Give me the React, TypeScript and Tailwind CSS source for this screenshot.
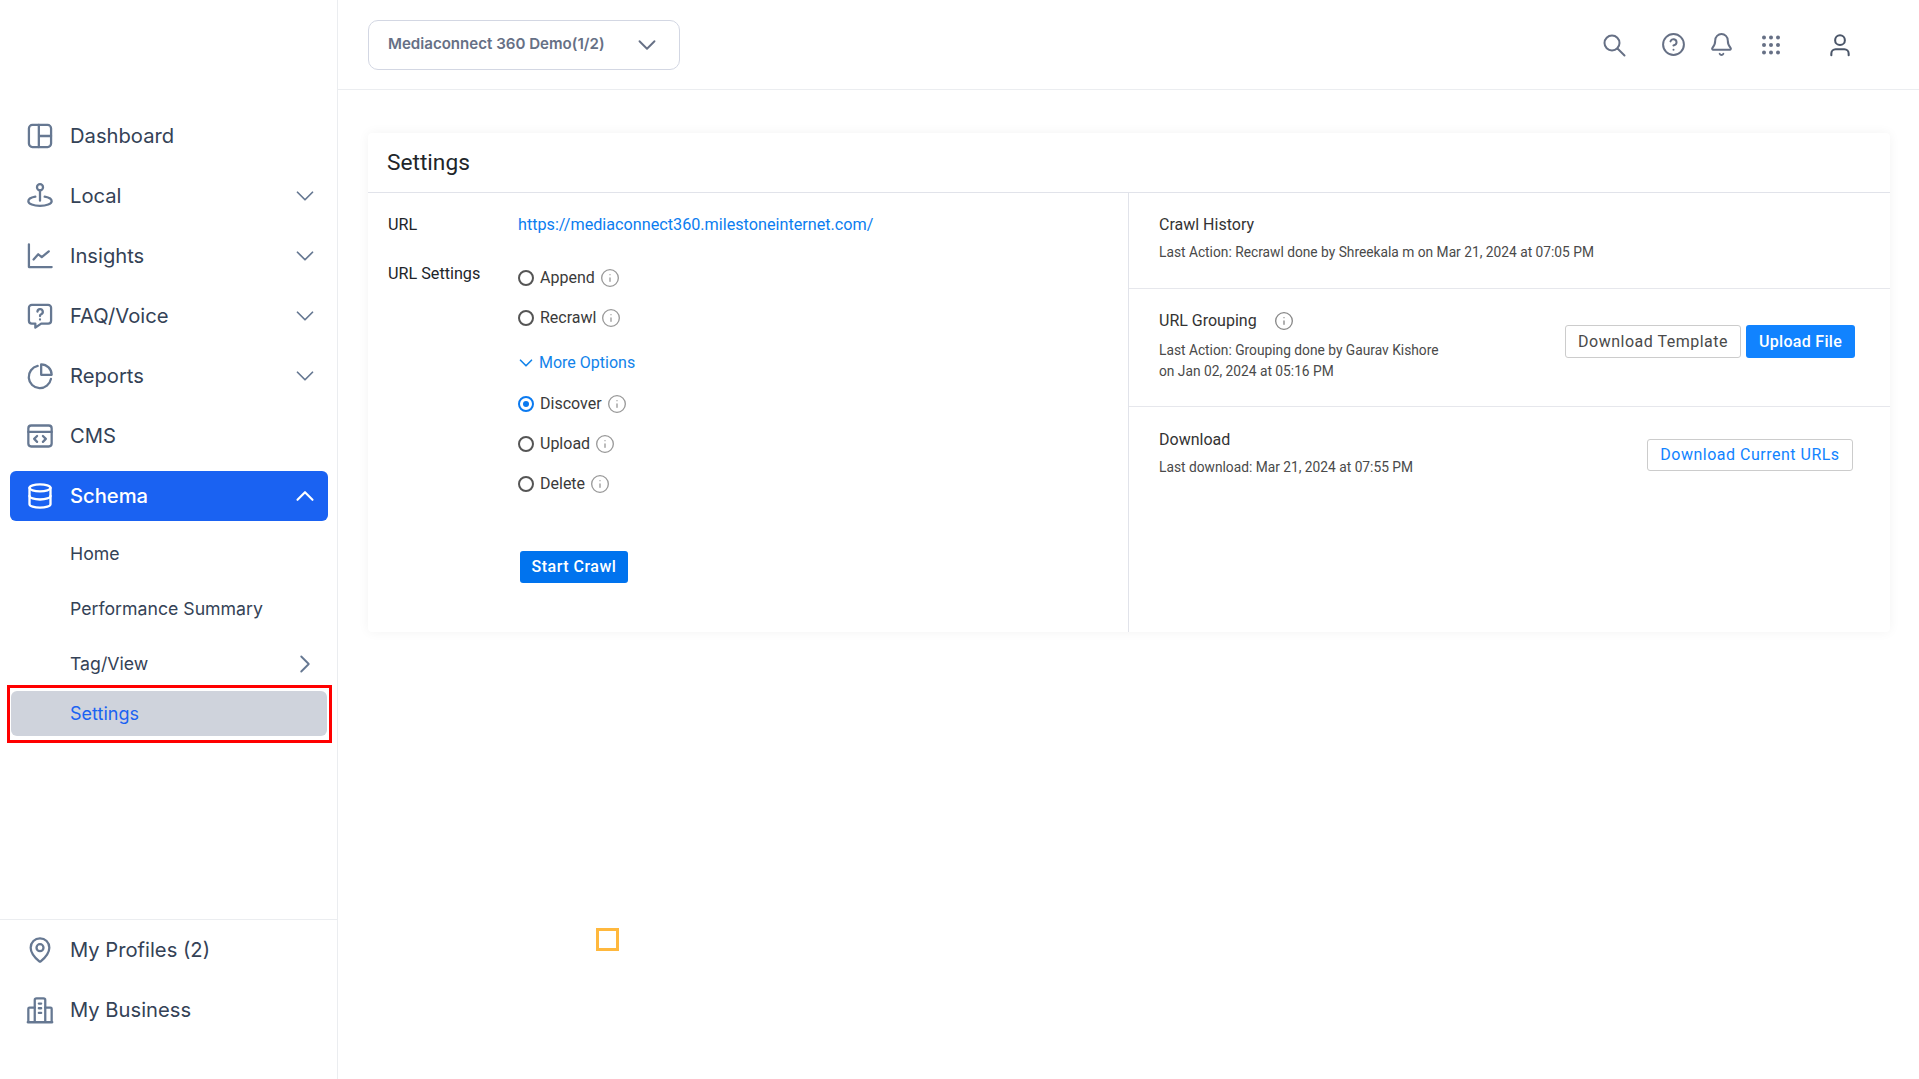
import React from "react";
import { ChevronDown, ChevronUp, ChevronRight, Bell, CircleHelp, Database, MapPin, Info } from "lucide-react";

const Ico = ({ children, className = "" }: { children: React.ReactNode; className?: string }) => (
  <svg width="28" height="28" viewBox="0 0 24 24" fill="none" stroke="currentColor" strokeWidth="1.95" strokeLinecap="round" strokeLinejoin="round" className={className}>
    {children}
  </svg>
);

const icons: Record<string, React.ReactNode> = {
  Dashboard: <Ico><rect x="2.5" y="2.5" width="19" height="19" rx="3" /><path d="M11 2.5v19M11 12h10.5" /></Ico>,
  Local: <Ico><circle cx="12" cy="4.5" r="2.6" /><path d="M12 7v9" /><path d="M8 12.6c-3.4.6-6 1.9-6 3.9 0 2.3 4.5 3.9 10 3.9s10-1.6 10-3.9c0-2-2.6-3.300-6-3.900" /></Ico>,
  Insights: <Ico><path d="M2.500 2v19.500H22" /><path d="M6.500 15l4-4.500 3 2.500 6-5" /></Ico>,
  "FAQ/Voice": <Ico><path d="M5 2.500h14a2.500 2.500 0 0 1 2.500 2.500v11a2.500 2.500 0 0 1-2.500 2.500h-6l-5 3.500v-3.500H5A2.500 2.500 0 0 1 2.500 16V5A2.500 2.500 0 0 1 5 2.500z" /><path d="M9.800 8.200a2.300 2.300 0 1 1 3.200 2.300c-.7.3-1 .8-1 1.500" /><path d="M12 15h.01" /></Ico>,
  Reports: <Ico><path d="M10 3.400A9.600 9.600 0 1 0 21.400 14.500" /><path d="M13 2a9 9 0 0 1 9 9h-9z" /></Ico>,
  CMS: <Ico><rect x="2" y="3" width="20" height="18" rx="2.500" /><path d="M2 8.500h20" /><path d="M9.500 12l-2.500 2.500 2.500 2.500M14.500 12l2.500 2.500-2.500 2.500" /></Ico>,
  Schema: <Database size={28} strokeWidth={2} />,
};

const Row = ({ label, chev }: { label: string; chev?: boolean }) => (
  <div className="h-[50px] ml-[10px] mr-[9px] pl-[16px] pr-[8px] flex items-center text-[#667892]">
    <span className="w-[28px] flex justify-center">{icons[label]}</span>
    <span className="ml-[16px] flex-1 text-[20.2px] text-[#344256]">{label}</span>
    {chev && <ChevronDown size={30} strokeWidth={1.4} />}
  </div>
);

const Radio = ({ label, on }: { label: string; on?: boolean }) => (
  <div className="flex items-center h-[24px] text-[16px] text-[#3a3a3a]">
    <span className={"w-[16px] h-[16px] rounded-full border-2 flex items-center justify-center " + (on ? "border-[#0b7af0]" : "border-[#555555]")}>
      {on && <span className="w-[6px] h-[6px] rounded-full bg-[#0b7af0]" />}
    </span>
    <span className="ml-[6px]">{label}</span>
    <Info size={20} strokeWidth={1.6} className="ml-[5px] text-[#999999]" />
  </div>
);

export default function App() {
  return (
    <div className="relative flex h-screen overflow-hidden bg-white font-['Roboto',sans-serif]">
      <aside className="w-[338px] shrink-0 border-r border-[#ebedf0] flex flex-col font-['Inter',sans-serif]">
        <nav className="pt-[111px] flex flex-col gap-[10px]">
          <Row label="Dashboard" />
          <Row label="Local" chev />
          <Row label="Insights" chev />
          <Row label="FAQ/Voice" chev />
          <Row label="Reports" chev />
          <Row label="CMS" />
          <div className="h-[50px] ml-[10px] mr-[9px] pl-[16px] pr-[8px] flex items-center rounded-[6px] bg-[#1a62f2] text-white">
            <span className="w-[28px] flex justify-center">{icons.Schema}</span>
            <span className="ml-[16px] flex-1 text-[20.2px] font-medium">Schema</span>
            <ChevronUp size={30} strokeWidth={1.7} />
          </div>
        </nav>
        <div className="mt-[10px] flex flex-col text-[17.7px] text-[#344256]">
          <div className="h-[45px] pl-[70px] pt-[2px] flex items-center">Home</div>
          <div className="h-[45px] mt-[10px] pl-[70px] pt-[2px] flex items-center">Performance Summary</div>
          <div className="h-[45px] mt-[10px] pl-[70px] pr-[17px] flex items-center justify-between">
            <span className="pt-[2px]">Tag/View</span>
            <ChevronRight size={30} strokeWidth={1.5} className="text-[#667892]" />
          </div>
          <div className="h-[45px] mt-[5px] ml-[11px] mr-[10px] pl-[59px] flex items-center rounded-[6px] bg-[#cfd3dc] text-[#1a62f2] text-[18px]">Settings</div>
        </div>
        <div className="mt-auto mb-[44px] border-t border-[#ebedf0] pt-[5px] flex flex-col gap-[10px]">
          <div className="h-[50px] mx-[10px] pl-[16px] flex items-center text-[#667892]">
            <span className="w-[28px] flex justify-center"><MapPin size={28} strokeWidth={1.95} /></span>
            <span className="ml-[16px] text-[20.2px] text-[#344256]">My Profiles (2)</span>
          </div>
          <div className="h-[50px] mx-[10px] pl-[16px] flex items-center text-[#667892]">
            <span className="w-[28px] flex justify-center">
              <Ico><path d="M1.500 22.500h21" /><path d="M7.500 22V3.500a1.500 1.500 0 0 1 1.500-1.500h6a1.500 1.500 0 0 1 1.500 1.500V22" /><path d="M7.500 10H3a1 1 0 0 0-1 1v11M16.500 10H21a1 1 0 0 1 1 1v11" /><path d="M11 6.500h2M11 10.500h2M11 14.500h2" /></Ico>
            </span>
            <span className="ml-[16px] text-[20.2px] text-[#344256]">My Business</span>
          </div>
        </div>
      </aside>

      <main className="flex-1 min-w-0 flex flex-col">
        <header className="h-[90px] shrink-0 border-b border-[#ebedf0] flex items-center pl-[30px] text-[#667085]">
          <div className="w-[312px] h-[50px] rounded-[10px] border border-[#d3d7e3] flex items-center pl-[19px] pr-[17px] justify-between font-['Inter',sans-serif] text-[15.1px] font-semibold">
            Mediaconnect 360 Demo(1/2)
            <ChevronDown size={30} strokeWidth={1.5} />
          </div>
          <div className="ml-auto flex items-center pr-[66px]">
            <svg width="26" height="26" viewBox="0 0 26 26" fill="none" stroke="currentColor" strokeWidth="2" strokeLinecap="round">
              <circle cx="11" cy="11" r="7.500" /><path d="M16.500 16.500l7 7" />
            </svg>
            <CircleHelp size={25} strokeWidth={1.9} className="ml-[34px]" />
            <Bell size={25} strokeWidth={1.9} className="ml-[23px]" />
            <svg width="20" height="20" viewBox="0 0 20 20" fill="currentColor" className="ml-[27px]">
              <circle cx="3" cy="2.500" r="2" /><circle cx="10" cy="2.500" r="2" /><circle cx="17" cy="2.500" r="2" />
              <circle cx="3" cy="10" r="2" /><circle cx="10" cy="10" r="2" /><circle cx="17" cy="10" r="2" />
              <circle cx="3" cy="17.500" r="2" /><circle cx="10" cy="17.500" r="2" /><circle cx="17" cy="17.500" r="2" />
            </svg>
            <svg width="26" height="26" viewBox="0 0 24 24" fill="none" stroke="#4a5568" strokeWidth="1.900" strokeLinecap="round" className="ml-[46px]">
              <circle cx="12" cy="7.500" r="4.500" /><path d="M4 21.500v-1.500a4 4 0 0 1 4-4h8a4 4 0 0 1 4 4v1.500" />
            </svg>
          </div>
        </header>

        <section className="mt-[43px] ml-[30px] mr-[29px] h-[499px] bg-white rounded-[4px] shadow-[0_0_12px_rgba(0,0,0,0.05)] flex flex-col">
          <div className="h-[60px] shrink-0 border-b border-[#e1e3ea] flex items-center pl-[19px] pt-[2px] text-[22.7px] text-[#212529]">Settings</div>
          <div className="flex-1 flex min-h-0">
            <div className="w-[761px] shrink-0 border-r border-[#e1e3ea] pl-[20px] flex flex-col">
              <div className="flex items-center mt-[20px] h-[24px]">
                <span className="w-[130px] text-[16.2px] text-[#212529]">URL</span>
                <span className="text-[16.2px] text-[#0b7df0]">https://mediaconnect360.milestoneinternet.com/</span>
              </div>
              <div className="flex mt-[25px]">
                <span className="w-[130px] text-[16.2px] text-[#212529] h-[24px] leading-[24px]">URL Settings</span>
                <div className="ml-[-1px] pl-[1px] flex flex-col mt-[4px]">
                  <Radio label="Append" />
                  <div className="mt-[16px]"><Radio label="Recrawl" /></div>
                  <div className="mt-[21px] h-[24px] flex items-center text-[16px] text-[#1283ea]">
                    <ChevronDown size={22} strokeWidth={1.8} className="ml-[-3px]" />
                    <span className="ml-[2px]">More Options</span>
                  </div>
                  <div className="mt-[17px]"><Radio label="Discover" on /></div>
                  <div className="mt-[16px]"><Radio label="Upload" /></div>
                  <div className="mt-[16px]"><Radio label="Delete" /></div>
                  <button className="mt-[55px] ml-[2px] w-[108px] h-[32px] rounded-[3px] bg-[#0073ee] text-white text-[16px] tracking-[0.5px] font-medium flex items-center justify-center">Start Crawl</button>
                </div>
              </div>
            </div>
            <div className="flex-1 flex flex-col text-[13.77px] text-[#4a4a4a]">
              <div className="h-[96px] shrink-0 border-b border-[#e6e7ec] pl-[30px] pt-[20px]">
                <div className="h-[24px] leading-[24px] text-[16px] text-[#333333]">Crawl History</div>
                <div className="h-[24px] leading-[24px] mt-[3px]">Last Action: Recrawl done by Shreekala m on Mar 21, 2024 at 07:05 PM</div>
              </div>
              <div className="h-[118px] shrink-0 border-b border-[#e6e7ec] pl-[30px] pr-[35px] flex justify-between">
                <div className="pt-[20px]">
                  <div className="h-[24px] flex items-center text-[16px] text-[#333333]">
                    URL Grouping
                    <Info size={20} strokeWidth={1.6} className="ml-[17px] text-[#888888]" />
                  </div>
                  <div className="mt-[7px] leading-[21px]">Last Action: Grouping done by Gaurav Kishore<br />on Jan 02, 2024 at 05:16 PM</div>
                </div>
                <div className="flex gap-[5px] mt-[36px]">
                  <button className="w-[176px] h-[33px] rounded-[3px] border border-[#cccccc] text-[16px] tracking-[0.5px] text-[#4a4a4a]">Download Template</button>
                  <button className="w-[109px] h-[33px] rounded-[3px] bg-[#1183ff] text-white text-[16px] tracking-[0.3px] font-medium">Upload File</button>
                </div>
              </div>
              <div className="flex-1 pl-[30px] pr-[37px] flex justify-between">
                <div className="pt-[21px]">
                  <div className="h-[24px] leading-[24px] text-[16px] text-[#333333]">Download</div>
                  <div className="h-[24px] leading-[24px] mt-[3px]">Last download: Mar 21, 2024 at 07:55 PM</div>
                </div>
                <button className="mt-[32px] w-[206px] h-[32px] rounded-[3px] border border-[#cccccc] text-[16px] tracking-[0.5px] text-[#1183ff]">Download Current URLs</button>
              </div>
            </div>
          </div>
        </section>
      </main>

      <div className="absolute left-[7px] top-[685px] w-[325px] h-[58px] border-[3px] border-[#ff0000] pointer-events-none" />
      <div className="absolute left-[596px] top-[928px] w-[23px] h-[23px] border-[3px] border-[#ffb83d] pointer-events-none" />
    </div>
  );
}
